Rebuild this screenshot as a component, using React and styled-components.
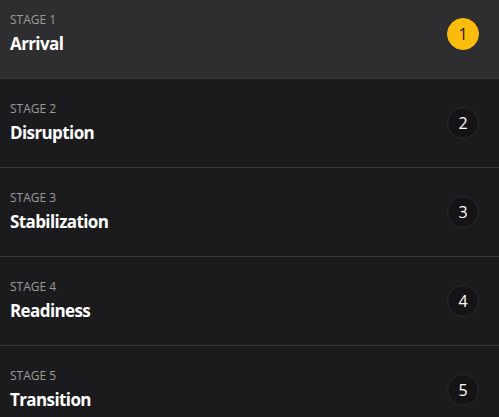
import styled, { createGlobalStyle } from "styled-components";

const stages = [
  { n: 1, name: "Arrival" },
  { n: 2, name: "Disruption" },
  { n: 3, name: "Stabilization" },
  { n: 4, name: "Readiness" },
  { n: 5, name: "Transition" },
];

const GlobalStyle = createGlobalStyle`
  html, body {
    margin: 0;
    padding: 0;
    background: #1b1b1d;
    overflow: hidden;
  }
  body {
    font-family: "Open Sans", "Noto Sans", sans-serif;
  }
`;

const App = () => {
  const active = 1;

  return (
    <>
      <GlobalStyle />
      <List>
        {stages.map((stage) => (
          <Row key={stage.n} $active={stage.n === active}>
            <Text>
              <Label>Stage {stage.n}</Label>
              <Title>{stage.name}</Title>
            </Text>
            <Badge $active={stage.n === active}>{stage.n}</Badge>
          </Row>
        ))}
      </List>
    </>
  );
};

export default App;

const List = styled.div`
  display: flex;
  flex-direction: column;
  margin-top: -10px;
  width: 499px;
`;

const Row = styled.div`
  display: flex;
  align-items: center;
  justify-content: space-between;
  height: 88px;
  padding: 0 20px 0 10px;
  background: ${(p) => (p.$active ? "#2e2e30" : "#1b1b1d")};
  border-bottom: 1px solid #39393b;
`;

const Text = styled.div`
  display: flex;
  flex-direction: column;
  gap: 4px;
`;

const Label = styled.span`
  font-size: 12px;
  line-height: 16px;
  text-transform: uppercase;
  color: #9b9b9d;
`;

const Title = styled.span`
  font-size: 17px;
  line-height: 24px;
  font-weight: 700;
  letter-spacing: -0.6px;
  color: #ffffff;
`;

const Badge = styled.div`
  width: 32px;
  height: 32px;
  border-radius: 50%;
  box-sizing: border-box;
  display: flex;
  align-items: center;
  justify-content: center;
  font-size: 16px;
  color: ${(p) => (p.$active ? "#1b1b1d" : "#ffffff")};
  background: ${(p) => (p.$active ? "#fbbc0c" : "#141416")};
  border: 1px solid ${(p) => (p.$active ? "#fbbc0c" : "#2a2a2c")};
`;
